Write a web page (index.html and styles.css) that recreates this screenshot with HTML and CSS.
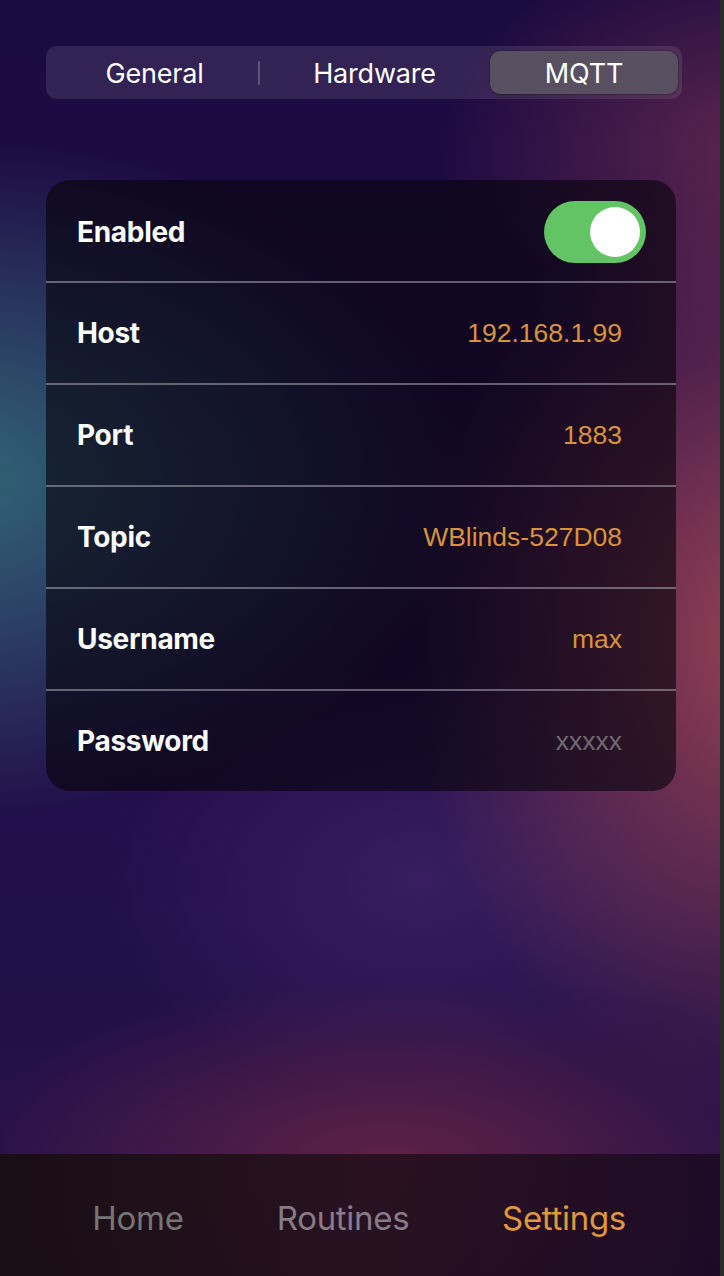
FILE: index.html
```html
<!DOCTYPE html>
<html>
<head>
<meta charset="utf-8">
<link rel="stylesheet" href="styles.css">
</head>
<body>
<div class="screen">
  <div class="app">
    <main class="content">
      <nav class="segmented">
        <div class="seg seg-general">General</div>
        <div class="seg-divider"></div>
        <div class="seg seg-hardware">Hardware</div>
        <div class="seg seg-mqtt selected">MQTT</div>
      </nav>
      <section class="card">
        <div class="row">
          <span class="label">Enabled</span>
          <span class="toggle"><span class="knob"></span></span>
        </div>
        <div class="row">
          <span class="label">Host</span>
          <span class="value">192.168.1.99</span>
        </div>
        <div class="row">
          <span class="label">Port</span>
          <span class="value">1883</span>
        </div>
        <div class="row">
          <span class="label">Topic</span>
          <span class="value">WBlinds-527D08</span>
        </div>
        <div class="row">
          <span class="label">Username</span>
          <span class="value">max</span>
        </div>
        <div class="row">
          <span class="label">Password</span>
          <span class="value placeholder">xxxxx</span>
        </div>
      </section>
    </main>
    <footer class="tabbar">
      <span class="tab tab-home">Home</span>
      <span class="tab tab-routines">Routines</span>
      <span class="tab tab-settings active">Settings</span>
    </footer>
  </div>
  <div class="edge"></div>
</div>
</body>
</html>
```

FILE: styles.css
```css
* { box-sizing: border-box; }
html, body {
  margin: 0;
  padding: 0;
  width: 724px;
  height: 1276px;
  overflow: hidden;
}
body {
  font-family: Inter, "Noto Sans", "Liberation Sans", sans-serif;
  color: #fff;
  background: #1c0b3e;
}
.screen {
  display: flex;
  width: 724px;
  height: 1276px;
}
.app {
  width: 720px;
  height: 1276px;
  display: flex;
  flex-direction: column;
  background:
    radial-gradient(ellipse 540px 340px at -60px 480px, rgba(50,108,122,0.95), rgba(50,108,122,0) 100%),
    radial-gradient(ellipse 360px 480px at 770px 640px, rgba(160,70,84,0.95), rgba(160,70,84,0) 100%),
    radial-gradient(ellipse 320px 220px at 760px 150px, rgba(110,45,80,0.8), rgba(110,45,80,0) 100%),
    radial-gradient(ellipse 420px 180px at 390px 1160px, rgba(100,35,70,0.9), rgba(100,35,70,0) 100%),
    radial-gradient(ellipse 320px 220px at 420px 880px, rgba(70,40,110,0.6), rgba(70,40,110,0) 100%),
    linear-gradient(180deg, #1b0a3f 0%, #240c4c 40%, #22104a 75%, #2b1248 100%);
}
.edge {
  width: 4px;
  height: 1276px;
  background: #2a2a2a;
}
.content {
  flex: 1;
  padding: 46px 0 0 46px;
}

/* segmented control */
.segmented {
  width: 636px;
  height: 53px;
  border-radius: 11px;
  background: rgba(255,255,255,0.1);
  padding: 5px 4px;
  display: grid;
  grid-template-columns: 209px 0px 231px 188px;
  align-items: center;
}
.seg {
  height: 43px;
  display: flex;
  align-items: center;
  justify-content: center;
  font-size: 27px;
  font-weight: 400;
  color: #fff;
  letter-spacing: -0.2px;
  padding-top: 1px;
}
.seg-divider {
  width: 2px;
  height: 24px;
  margin-left: -1px;
  background: rgba(255,255,255,0.22);
  border-radius: 1px;
}
.seg.selected {
  background: #585060;
  border-radius: 10px;
  box-shadow: 0 0 0 1px rgba(0,0,0,0.12), 0 2px 4px rgba(0,0,0,0.15);
}

/* card */
.card {
  margin-top: 81px;
  width: 630px;
  border-radius: 24px;
  background: rgba(6,4,12,0.62);
  overflow: hidden;
}
.row {
  height: 102px;
  display: flex;
  align-items: center;
  justify-content: space-between;
  padding: 0 54px 0 31px;
  border-top: 2px solid rgba(170,165,180,0.55);
}
.row:first-child {
  border-top: none;
  height: 101px;
  padding-right: 30px;
  padding-top: 2px;
}
.label {
  font-size: 28px;
  font-weight: 700;
  color: #fff;
  letter-spacing: -0.3px;
}
.value {
  font-family: "Liberation Sans", Arial, sans-serif;
  font-size: 26.5px;
  font-weight: 400;
  color: #d8923a;
}
.value.placeholder {
  color: #6d6a70;
}
.toggle {
  width: 102px;
  height: 62px;
  border-radius: 31px;
  background: #63c466;
  display: flex;
  align-items: center;
  justify-content: flex-end;
  padding-right: 6px;
}
.knob {
  width: 50px;
  height: 50px;
  border-radius: 50%;
  background: #fff;
}

/* tab bar */
.tabbar {
  height: 122px;
  background: linear-gradient(90deg, rgba(24,14,16,0.94), rgba(36,16,28,0.9) 50%, rgba(28,10,36,0.92));
  display: grid;
  grid-template-columns: 138px 205px 221px;
  align-items: center;
}
.tab {
  font-size: 33px;
  font-weight: 400;
  justify-self: end;
  transform: translateX(50%);
  padding-top: 6px;
  letter-spacing: -0.3px;
}
.tab-home { color: #767477; }
.tab-routines { color: #857c87; }
.tab-settings { color: #e0963a; }
```
